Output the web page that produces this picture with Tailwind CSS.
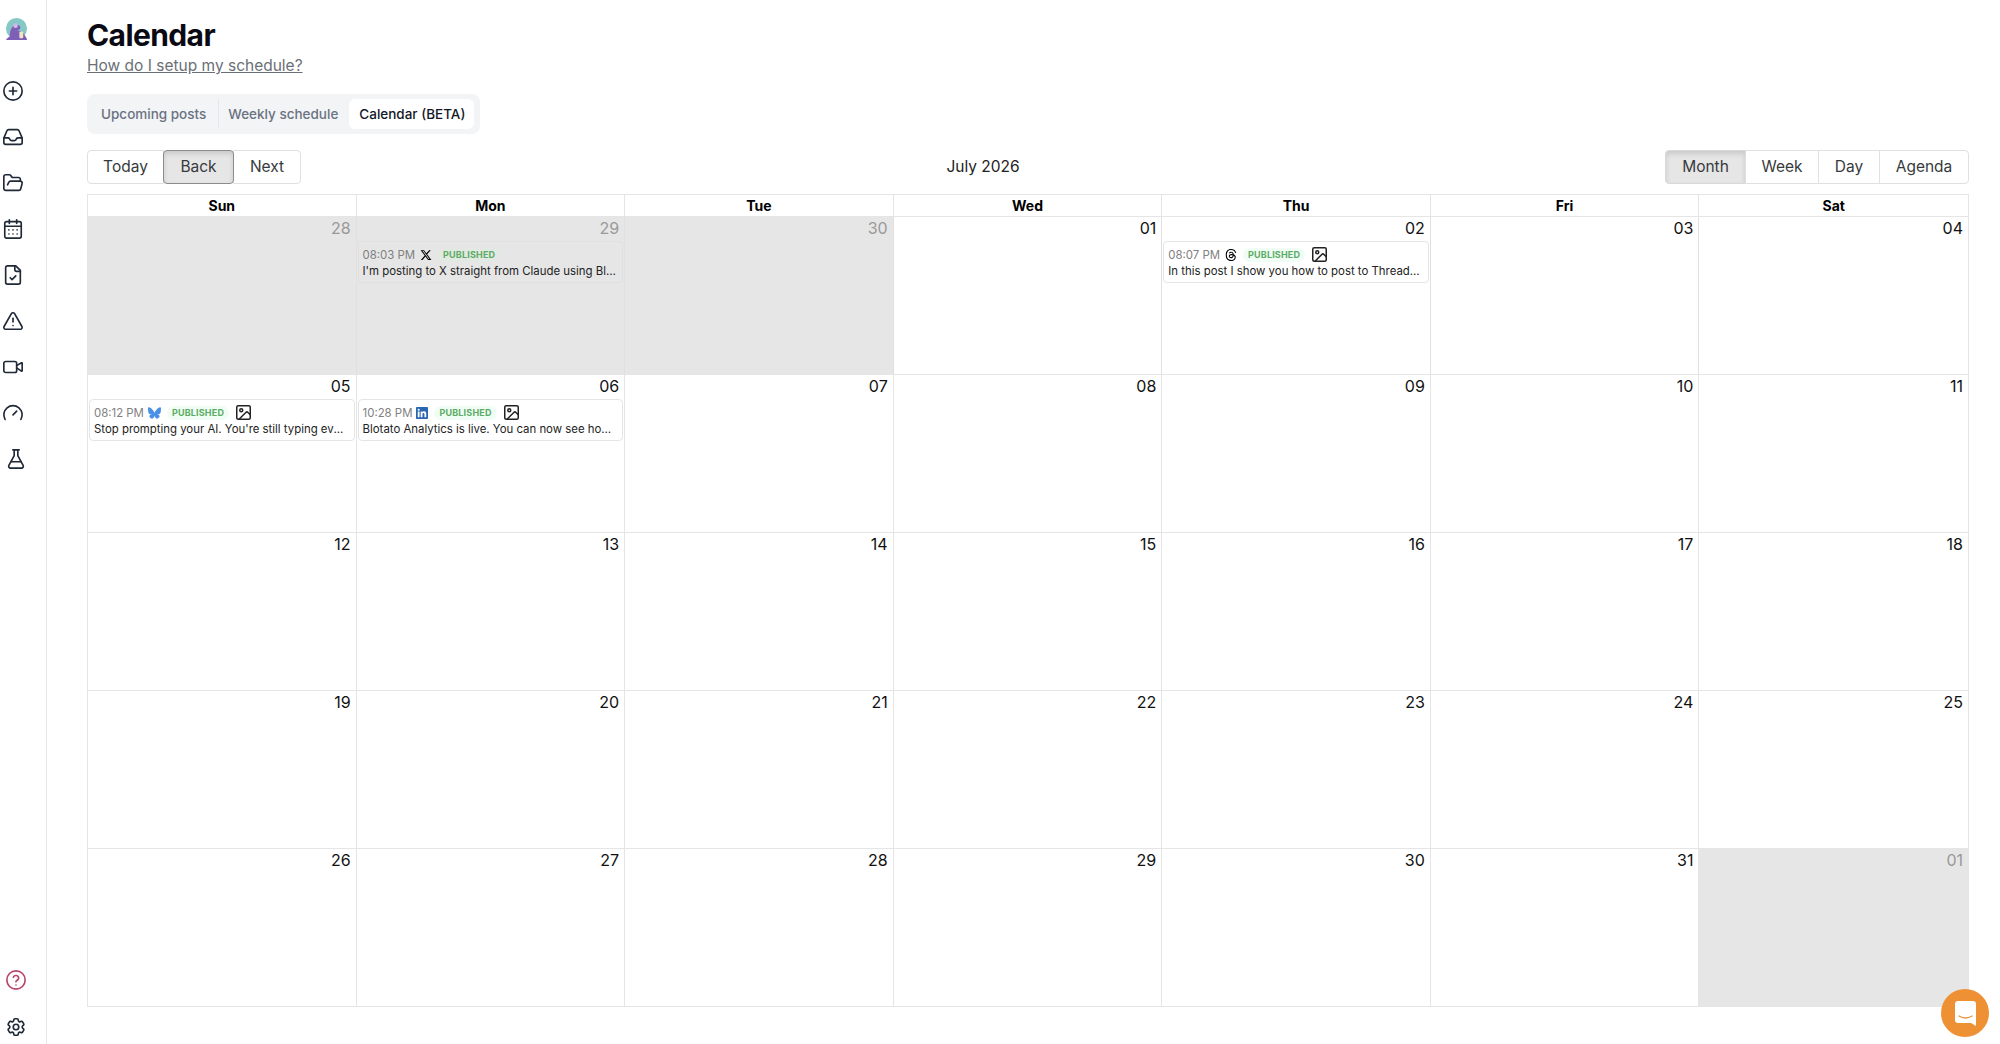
<!DOCTYPE html>
<html lang="en">
<head>
<meta charset="utf-8">
<title>Calendar</title>
<script src="https://cdn.jsdelivr.net/npm/@tailwindcss/browser@4"></script>
</head>
<body class="bg-white font-['Inter',sans-serif] text-[#373a3c]">
<div class="flex h-[1044px] w-[2000px] overflow-hidden relative">
  <!-- Sidebar -->
  <aside class="w-[47px] shrink-0 border-r border-[#e5e7eb] flex flex-col text-[#1f2937]">
    <svg class="ml-[5px] mt-[18px] w-[23px] h-[23px]" viewBox="0 0 24 24">
      <circle cx="12" cy="11" r="11" fill="#86c8c6"/>
      <path d="M1 23c1-2 3-3 4-4 0-4 1-9 4-11 3-2 7-1 7 2 0 2-2 3-4 3 3 0 6 1 8 4 1 2 3 4 3 6z" fill="#7d5fb8"/>
      <circle cx="11" cy="8" r="2.4" fill="#cdbbe8"/>
      <rect x="15" y="14" width="4" height="7" rx="1" fill="#efe6c0"/>
    </svg>
    <div class="mt-[39px] ml-[2px] flex flex-col gap-[24px]">
      <svg class="w-[22px] h-[22px]" viewBox="0 0 24 24" fill="none" stroke="currentColor" stroke-width="1.8" stroke-linecap="round" stroke-linejoin="round"><circle cx="12" cy="12" r="10"/><path d="M12 8v8m4-4H8"/></svg>
      <svg class="w-[22px] h-[22px]" viewBox="0 0 24 24" fill="none" stroke="currentColor" stroke-width="1.8" stroke-linecap="round" stroke-linejoin="round"><path d="M2 13h4.5a2 2 0 0 1 1.8 1.1l.4.8a2 2 0 0 0 1.8 1.1h3a2 2 0 0 0 1.8-1.1l.4-.8a2 2 0 0 1 1.8-1.1H22"/><path d="M2 13.5V18a2 2 0 0 0 2 2h16a2 2 0 0 0 2-2v-4.5c0-.3 0-.6-.2-.8L18.6 5.2A2 2 0 0 0 16.8 4H7.2a2 2 0 0 0-1.8 1.2L2.2 12.7c-.2.2-.2.5-.2.8Z"/></svg>
      <svg class="w-[22px] h-[22px]" viewBox="0 0 24 24" fill="none" stroke="currentColor" stroke-width="1.8" stroke-linecap="round" stroke-linejoin="round"><path d="m6 14 1.5-2.9A2 2 0 0 1 9.24 10H20a2 2 0 0 1 1.94 2.5l-1.54 6a2 2 0 0 1-1.95 1.5H4a2 2 0 0 1-2-2V5a2 2 0 0 1 2-2h3.9a2 2 0 0 1 1.69.9l.81 1.2a2 2 0 0 0 1.67.9H18a2 2 0 0 1 2 2v2"/></svg>
      <svg class="w-[22px] h-[22px]" viewBox="0 0 24 24" fill="none" stroke="currentColor" stroke-width="1.8" stroke-linecap="round" stroke-linejoin="round"><rect x="3" y="4" width="18" height="18" rx="2"/><path d="M8 2v4M16 2v4M3 9h18"/><path d="M7.5 13h.01M12 13h.01M16.5 13h.01M7.5 17.5h.01M12 17.5h.01M16.5 17.5h.01"/></svg>
      <svg class="w-[22px] h-[22px]" viewBox="0 0 24 24" fill="none" stroke="currentColor" stroke-width="1.8" stroke-linecap="round" stroke-linejoin="round"><path d="M15 2H6a2 2 0 0 0-2 2v16a2 2 0 0 0 2 2h12a2 2 0 0 0 2-2V7Z"/><path d="M14 2v4a2 2 0 0 0 2 2h4"/><path d="m9 15 2 2 4-4"/></svg>
      <svg class="w-[22px] h-[22px]" viewBox="0 0 24 24" fill="none" stroke="currentColor" stroke-width="1.8" stroke-linecap="round" stroke-linejoin="round"><path d="m21.73 18-8-14a2 2 0 0 0-3.48 0l-8 14A2 2 0 0 0 4 21h16a2 2 0 0 0 1.73-3"/><path d="M12 9v4"/><path d="M12 17h.01"/></svg>
      <svg class="w-[22px] h-[22px]" viewBox="0 0 24 24" fill="none" stroke="currentColor" stroke-width="1.8" stroke-linecap="round" stroke-linejoin="round"><path d="m16 13 5.223 3.482a.5.5 0 0 0 .777-.416V7.87a.5.5 0 0 0-.752-.432L16 10.5"/><rect x="2" y="6" width="14" height="12" rx="2"/></svg>
      <svg class="w-[22px] h-[22px]" viewBox="0 0 24 24" fill="none" stroke="currentColor" stroke-width="1.8" stroke-linecap="round" stroke-linejoin="round"><path d="m12 14 4-4"/><path d="M3.34 19a10 10 0 1 1 17.32 0"/></svg>
      <svg class="w-[22px] h-[22px] ml-[3px]" viewBox="0 0 24 24" fill="none" stroke="currentColor" stroke-width="1.8" stroke-linecap="round" stroke-linejoin="round"><path d="M14 2v6a2 2 0 0 0 .245.96l5.51 10.08A2 2 0 0 1 18 22H6a2 2 0 0 1-1.755-2.96l5.51-10.08A2 2 0 0 0 10 8V2"/><path d="M6.453 15h11.094"/><path d="M8.5 2h7"/></svg>
    </div>
    <div class="mt-auto mb-[6px] ml-[5px] flex flex-col gap-[25px]">
      <svg class="w-[22px] h-[22px] text-[#b8436f]" viewBox="0 0 24 24" fill="none" stroke="currentColor" stroke-width="1.8" stroke-linecap="round" stroke-linejoin="round"><circle cx="12" cy="12" r="10"/><path d="M9.1 9a3 3 0 0 1 5.8 1c0 2-3 2.5-3 4"/><path d="M12 17.5h.01"/></svg>
      <svg class="w-[22px] h-[22px]" viewBox="0 0 24 24" fill="none" stroke="currentColor" stroke-width="1.8" stroke-linecap="round" stroke-linejoin="round"><path d="M9.594 3.94c.09-.542.56-.94 1.11-.94h2.593c.55 0 1.02.398 1.11.94l.213 1.281c.063.374.313.686.645.87.074.04.147.083.22.127.325.196.72.257 1.075.124l1.217-.456a1.125 1.125 0 0 1 1.37.49l1.296 2.247a1.125 1.125 0 0 1-.26 1.431l-1.003.827c-.293.241-.438.613-.43.992a7.723 7.723 0 0 1 0 .255c-.008.378.137.75.43.991l1.004.827c.424.35.534.955.26 1.43l-1.298 2.247a1.125 1.125 0 0 1-1.369.491l-1.217-.456c-.355-.133-.75-.072-1.076.124a6.47 6.47 0 0 1-.22.128c-.331.183-.581.495-.644.869l-.213 1.281c-.09.543-.56.94-1.11.94h-2.594c-.55 0-1.019-.398-1.11-.94l-.213-1.281c-.062-.374-.312-.686-.644-.87a6.52 6.52 0 0 1-.22-.127c-.325-.196-.72-.257-1.076-.124l-1.217.456a1.125 1.125 0 0 1-1.369-.49l-1.297-2.247a1.125 1.125 0 0 1 .26-1.431l1.004-.827c.292-.24.437-.613.43-.991a6.932 6.932 0 0 1 0-.255c.007-.38-.138-.751-.43-.992l-1.004-.827a1.125 1.125 0 0 1-.26-1.43l1.297-2.247a1.125 1.125 0 0 1 1.37-.491l1.216.456c.356.133.751.072 1.076-.124.072-.044.146-.086.22-.128.332-.183.582-.495.644-.869l.214-1.28Z"/><circle cx="12" cy="12" r="3"/></svg>
    </div>
  </aside>

  <!-- Main -->
  <main class="flex-1 pl-10 pr-[31px] pt-[17px]">
    <h1 class="text-3xl font-bold text-[#0a0a14] leading-9 tracking-[-0.02em]">Calendar</h1>
    <a class="block mt-px text-[15.5px] leading-6 text-[#6b6f76] underline">How do I setup my schedule?</a>

    <div class="mt-4 inline-flex items-center h-10 pl-[6px] pr-[6px] rounded-lg bg-[#f3f4f6] text-[13.5px] font-medium text-gray-500 align-top">
      <span class="pl-2 pr-[12px] h-[30px] leading-[30px]">Upcoming posts</span>
      <span class="pl-[9px] pr-[11px] h-[30px] leading-[30px] border-l border-[#e5e7eb]">Weekly schedule</span>
      <span class="pl-[10px] pr-[9px] h-[30px] leading-[30px] bg-white rounded-md text-[#111827]">Calendar (BETA)</span>
    </div>

    <div class="mt-4 flex items-center h-[34px] text-[15.5px]">
      <div class="flex h-full">
        <button class="w-[77px] border border-[#e0e0e0] rounded-l">Today</button>
        <button class="w-[71px] -ml-px border border-[#8c8c8c] bg-[#e6e6e6] rounded shadow-[inset_0_3px_5px_rgba(0,0,0,0.125)] relative">Back</button>
        <button class="w-[68px] -ml-px border border-[#e0e0e0] rounded-r">Next</button>
      </div>
      <div class="flex-1 text-center text-[#222] pb-px">July 2026</div>
      <div class="flex h-full">
        <button class="w-[81px] border border-[#d9d9d9] bg-[#e6e6e6] rounded-l shadow-[inset_0_3px_5px_rgba(0,0,0,0.125)]">Month</button>
        <button class="w-[74px] -ml-px border border-[#e0e0e0]">Week</button>
        <button class="w-[62px] -ml-px border border-[#e0e0e0]">Day</button>
        <button class="w-[90px] -ml-px border border-[#e0e0e0] rounded-r">Agenda</button>
      </div>
    </div>

    <!-- Calendar -->
    <div class="mt-[10px] border border-[#e5e5e5] text-[#111]">
      <div class="grid grid-cols-7 h-[21px] text-sm font-bold leading-[21px] text-center text-black divide-x divide-[#e5e5e5]">
        <div>Sun</div><div>Mon</div><div>Tue</div><div>Wed</div><div>Thu</div><div>Fri</div><div>Sat</div>
      </div>

      <div class="grid grid-cols-7 h-[158px] border-t border-[#e5e5e5] divide-x divide-[#e0e0e0] text-right text-base leading-[22px]">
        <div class="bg-[#e6e6e6] pr-[5px] text-[#999]">28</div>
        <div class="bg-[#e6e6e6] text-[#999]">
          <div class="pr-[5px]">29</div>
          <div class="mt-[2px] mx-px h-[42px] border border-[#e0e0e0] rounded px-1 text-left">
            <div class="flex items-center h-[17px] mt-[4px] text-[11.4px] text-[#808080]">
              <span>08:03 PM</span>
              <svg class="w-[12px] h-[12px] ml-[5px] text-black" viewBox="0 0 24 24" fill="currentColor"><path d="M18.244 2.25h3.308l-7.227 8.26 8.502 11.24H16.17l-5.214-6.817L4.99 21.75H1.68l7.73-8.835L1.254 2.25H8.08l4.713 6.231zm-1.161 17.52h1.833L7.084 4.126H5.117z"/></svg>
              <span class="ml-[6px] px-[5px] rounded-full bg-[#e2e8e2] text-[9px] leading-[14px] font-bold tracking-[0.02em] text-[#5cac66]">PUBLISHED</span>
            </div>
            <div class="truncate text-[11.4px] leading-[16px] text-[#222]">I'm posting to X straight from Claude using Blotato today</div>
          </div>
        </div>
        <div class="bg-[#e6e6e6] pr-[5px] text-[#999]">30</div>
        <div class="pr-[5px]">01</div>
        <div>
          <div class="pr-[5px]">02</div>
          <div class="mt-[2px] mx-px h-[42px] border border-[#e5e5e5] rounded px-1 text-left bg-white">
            <div class="flex items-center h-[17px] mt-[4px] text-[11.4px] text-[#808080]">
              <span>08:07 PM</span>
              <svg class="w-[12px] h-[12px] ml-[5px] text-black" viewBox="0 0 24 24" fill="currentColor"><path d="M12.186 24h-.007c-3.581-.024-6.334-1.205-8.184-3.509C2.35 18.44 1.5 15.586 1.472 12.01v-.017c.03-3.579.879-6.43 2.525-8.482C5.845 1.205 8.6.024 12.18 0h.014c2.746.02 5.043.725 6.826 2.098 1.677 1.29 2.858 3.13 3.509 5.467l-2.04.569c-1.104-3.96-3.898-5.984-8.304-6.015-2.91.022-5.11.936-6.54 2.717C4.307 6.504 3.616 8.914 3.589 12c.027 3.086.718 5.496 2.057 7.164 1.43 1.783 3.631 2.698 6.54 2.717 2.623-.02 4.358-.631 5.8-2.045 1.647-1.613 1.618-3.593 1.09-4.798-.31-.71-.873-1.3-1.634-1.75-.192 1.352-.622 2.446-1.284 3.272-.886 1.102-2.14 1.704-3.73 1.79-1.202.065-2.361-.218-3.259-.801-1.063-.689-1.685-1.74-1.752-2.964-.065-1.19.408-2.285 1.33-3.082.88-.76 2.119-1.207 3.583-1.291a13.853 13.853 0 0 1 3.02.142c-.126-.742-.375-1.332-.75-1.757-.513-.586-1.308-.883-2.359-.89h-.029c-.844 0-1.992.232-2.721 1.32L7.734 7.847c.98-1.454 2.568-2.256 4.478-2.256h.044c3.194.02 5.097 1.975 5.287 5.388.108.046.216.094.321.142 1.49.7 2.58 1.761 3.154 3.07.797 1.82.871 4.79-1.548 7.158-1.85 1.81-4.094 2.628-7.277 2.65Zm1.003-11.69c-.242 0-.487.007-.739.021-1.836.103-2.98.946-2.916 2.143.067 1.256 1.452 1.839 2.784 1.767 1.224-.065 2.818-.543 3.086-3.71a10.5 10.5 0 0 0-2.215-.221z"/></svg>
              <span class="ml-[6px] px-[5px] rounded-full bg-[#f0fdf4] text-[9px] leading-[14px] font-bold tracking-[0.02em] text-[#5cac66]">PUBLISHED</span>
              <svg class="w-[15px] h-[15px] ml-[7px] text-[#222]" viewBox="2 2 20 20" fill="none" stroke="currentColor" stroke-width="2" stroke-linecap="round" stroke-linejoin="round"><rect x="3" y="3" width="18" height="18" rx="2"/><circle cx="9" cy="9" r="2"/><path d="m21 15-3.1-3.1a2 2 0 0 0-2.8 0L6 21"/></svg>
            </div>
            <div class="truncate text-[11.4px] leading-[16px] text-[#222]">In this post I show you how to post to Threads with Blotato</div>
          </div>
        </div>
        <div class="pr-[5px]">03</div>
        <div class="pr-[5px]">04</div>
      </div>

      <div class="grid grid-cols-7 h-[158px] border-t border-[#e5e5e5] divide-x divide-[#e5e5e5] text-right text-base leading-[22px]">
        <div>
          <div class="pr-[5px]">05</div>
          <div class="mt-[2px] mx-px h-[42px] border border-[#e5e5e5] rounded px-1 text-left bg-white">
            <div class="flex items-center h-[17px] mt-[4px] text-[11.4px] text-[#808080]">
              <span>08:12 PM</span>
              <svg class="w-[13px] h-[12px] ml-[4px] text-[#4a90e8]" viewBox="0 0 568 501" fill="currentColor"><path d="M123.121 33.664C188.241 82.553 258.281 181.68 284 234.873c25.719-53.192 95.759-152.32 160.879-201.21C491.866-1.611 568-28.906 568 57.947c0 17.346-9.945 145.713-15.778 166.555-20.275 72.453-94.155 90.933-159.875 79.748C507.222 323.8 536.444 388.56 473.333 453.32c-119.86 122.992-172.272-30.859-185.702-70.281-2.462-7.227-3.614-10.608-3.631-7.733-.017-2.875-1.169.506-3.631 7.733-13.43 39.422-65.842 193.273-185.702 70.281-63.111-64.76-33.89-129.52 80.986-149.071-65.72 11.185-139.6-7.295-159.875-79.748C9.945 203.659 0 75.291 0 57.946 0-28.906 76.135-1.612 123.121 33.664Z"/></svg>
              <span class="ml-[6px] px-[5px] rounded-full bg-[#f0fdf4] text-[9px] leading-[14px] font-bold tracking-[0.02em] text-[#5cac66]">PUBLISHED</span>
              <svg class="w-[15px] h-[15px] ml-[7px] text-[#222]" viewBox="2 2 20 20" fill="none" stroke="currentColor" stroke-width="2" stroke-linecap="round" stroke-linejoin="round"><rect x="3" y="3" width="18" height="18" rx="2"/><circle cx="9" cy="9" r="2"/><path d="m21 15-3.1-3.1a2 2 0 0 0-2.8 0L6 21"/></svg>
            </div>
            <div class="truncate text-[11.4px] leading-[16px] text-[#222]">Stop prompting your AI. You're still typing everything by hand</div>
          </div>
        </div>
        <div>
          <div class="pr-[5px]">06</div>
          <div class="mt-[2px] mx-px h-[42px] border border-[#e5e5e5] rounded px-1 text-left bg-white">
            <div class="flex items-center h-[17px] mt-[4px] text-[11.4px] text-[#808080]">
              <span>10:28 PM</span>
              <svg class="w-[12px] h-[12px] ml-[4px] text-[#2867b2]" viewBox="0 0 24 24" fill="currentColor"><path d="M20.447 20.452h-3.554v-5.569c0-1.328-.027-3.037-1.852-3.037-1.853 0-2.136 1.445-2.136 2.939v5.667H9.351V9h3.414v1.561h.046c.477-.9 1.637-1.85 3.37-1.85 3.601 0 4.267 2.37 4.267 5.455v6.286zM5.337 7.433c-1.144 0-2.063-.926-2.063-2.065 0-1.138.92-2.063 2.063-2.063 1.14 0 2.064.925 2.064 2.063 0 1.139-.925 2.065-2.064 2.065zm1.782 13.019H3.555V9h3.564v11.452zM22.225 0H1.771C.792 0 0 .774 0 1.729v20.542C0 23.227.792 24 1.771 24h20.451C23.2 24 24 23.227 24 22.271V1.729C24 .774 23.2 0 22.222 0h.003z"/></svg>
              <span class="ml-[6px] px-[5px] rounded-full bg-[#f0fdf4] text-[9px] leading-[14px] font-bold tracking-[0.02em] text-[#5cac66]">PUBLISHED</span>
              <svg class="w-[15px] h-[15px] ml-[7px] text-[#222]" viewBox="2 2 20 20" fill="none" stroke="currentColor" stroke-width="2" stroke-linecap="round" stroke-linejoin="round"><rect x="3" y="3" width="18" height="18" rx="2"/><circle cx="9" cy="9" r="2"/><path d="m21 15-3.1-3.1a2 2 0 0 0-2.8 0L6 21"/></svg>
            </div>
            <div class="truncate text-[11.4px] leading-[16px] text-[#222]">Blotato Analytics is live. You can now see how posts perform</div>
          </div>
        </div>
        <div class="pr-[5px]">07</div>
        <div class="pr-[5px]">08</div>
        <div class="pr-[5px]">09</div>
        <div class="pr-[5px]">10</div>
        <div class="pr-[5px]">11</div>
      </div>

      <div class="grid grid-cols-7 h-[158px] border-t border-[#e5e5e5] divide-x divide-[#e5e5e5] text-right text-base leading-[22px]">
        <div class="pr-[5px]">12</div><div class="pr-[5px]">13</div><div class="pr-[5px]">14</div><div class="pr-[5px]">15</div><div class="pr-[5px]">16</div><div class="pr-[5px]">17</div><div class="pr-[5px]">18</div>
      </div>
      <div class="grid grid-cols-7 h-[158px] border-t border-[#e5e5e5] divide-x divide-[#e5e5e5] text-right text-base leading-[22px]">
        <div class="pr-[5px]">19</div><div class="pr-[5px]">20</div><div class="pr-[5px]">21</div><div class="pr-[5px]">22</div><div class="pr-[5px]">23</div><div class="pr-[5px]">24</div><div class="pr-[5px]">25</div>
      </div>
      <div class="grid grid-cols-7 h-[158px] border-t border-[#e5e5e5] divide-x divide-[#e5e5e5] text-right text-base leading-[22px]">
        <div class="pr-[5px]">26</div><div class="pr-[5px]">27</div><div class="pr-[5px]">28</div><div class="pr-[5px]">29</div><div class="pr-[5px]">30</div><div class="pr-[5px]">31</div><div class="pr-[5px] bg-[#e6e6e6] text-[#999]">01</div>
      </div>
    </div>
  </main>

  <!-- Chat launcher -->
  <div class="absolute left-[1941px] top-[989px] w-12 h-12 rounded-full bg-[#ee9134] flex items-center justify-center">
    <svg class="w-[21px] h-[25px]" viewBox="0 0 21 25"><path d="M3 0h15a3 3 0 0 1 3 3v22l-5-3H3a3 3 0 0 1-3-3V3a3 3 0 0 1 3-3Z" fill="#fff"/><path d="M4 15c4 2.500 9 2.500 13 0" fill="none" stroke="#ee9134" stroke-width="1.3" stroke-linecap="round"/></svg>
  </div>
</div>
</body>
</html>
